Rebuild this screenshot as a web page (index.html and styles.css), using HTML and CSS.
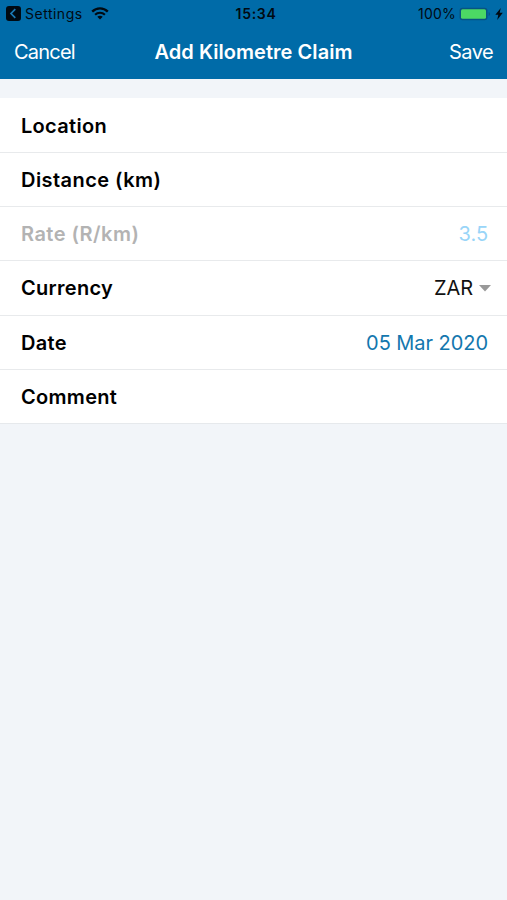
FILE: index.html
```html
<!DOCTYPE html>
<html lang="en">
<head>
  <meta charset="UTF-8">
  <meta name="viewport" content="width=device-width, initial-scale=1.0">
  <title>Add Kilometre Claim</title>
  <link rel="stylesheet" href="styles.css">
</head>
<body>
  <header class="header">
    <div class="status-bar">
      <div class="status-left">
        <svg class="back-icon" viewBox="0 0 15 15">
          <rect width="15" height="15" rx="3" fill="#000a12" />
          <path d="M9.3 3.2 L5 7.5 L9.3 11.8" fill="none" stroke="#1a7ab5" stroke-width="1.7" />
        </svg>
        <span class="status-app">Settings</span>
        <svg class="wifi-icon" viewBox="0 0 18 13">
          <path d="M1.2 4.6 C5.5 0.2 12.5 0.2 16.8 4.6" fill="none" stroke="#000a12" stroke-width="2.3" />
          <path d="M4.1 7.7 C6.8 5 11.2 5 13.9 7.7" fill="none" stroke="#000a12" stroke-width="2.1" />
          <path d="M6.3 9.8 C7.8 8.4 10.2 8.4 11.7 9.8 L9 12.5 Z" fill="#000a12" />
        </svg>
      </div>
      <span class="status-time">15:34</span>
      <div class="status-right">
        <span class="status-percent">100%</span>
        <svg class="battery-icon" viewBox="0 0 32 14">
          <rect x="0.5" y="0.7" width="28" height="12.6" rx="3" fill="#075482" />
          <rect x="2" y="2.2" width="25" height="9.6" rx="1.5" fill="#4cd964" />
          <path d="M29.7 5 C31.5 5.6 31.5 8.4 29.7 9 Z" fill="#075482" />
        </svg>
        <svg class="bolt-icon" viewBox="0 0 8 12">
          <path d="M5.8 0 L0.3 6.8 H3.3 L2.2 12 L7.8 4.8 H4.7 Z" fill="#000a12" />
        </svg>
      </div>
    </div>
    <nav class="nav-bar">
      <a class="nav-action nav-cancel">Cancel</a>
      <h1 class="nav-title">Add Kilometre Claim</h1>
      <a class="nav-action nav-save">Save</a>
    </nav>
  </header>

  <main class="form">
    <div class="row">
      <span class="label">Location</span>
    </div>
    <div class="row">
      <span class="label label-unit">Distance (km)</span>
    </div>
    <div class="row disabled">
      <span class="label label-unit">Rate (R/km)</span>
      <span class="value">3.5</span>
    </div>
    <div class="row select">
      <span class="label">Currency</span>
      <span class="value">ZAR</span>
      <svg class="caret" viewBox="0 0 12 7">
        <path d="M0 0 H12 L6 6.6 Z" fill="#999" />
      </svg>
    </div>
    <div class="row">
      <span class="label">Date</span>
      <span class="value">05 Mar 2020</span>
    </div>
    <div class="row">
      <span class="label">Comment</span>
    </div>
  </main>
</body>
</html>
```

FILE: styles.css
```css
body {
  margin: 0;
  min-height: 100vh;
  background-color: #f2f5f9;
  color: #000;
  font-family: Inter, 'Liberation Sans', sans-serif;
}
.header {
  height: 79px;
  background-color: #006ba8;
}
.status-bar {
  display: grid;
  grid-template-columns: 1fr auto 1fr;
  align-items: center;
  height: 27px;
  padding: 0 5px 0 6px;
  color: #000a12;
  font-size: 14px;
}
.status-left,
.status-right {
  display: flex;
  align-items: center;
}
.status-right {
  justify-content: flex-end;
}
.back-icon {
  width: 15px;
  height: 15px;
  margin-right: 4px;
}
.status-app {
  letter-spacing: 0.5px;
}
.wifi-icon {
  width: 18px;
  height: 13px;
  margin-left: 8px;
}
.status-time {
  padding-left: 4px;
  font-weight: 600;
  letter-spacing: 0.7px;
}
.status-percent {
  letter-spacing: 0.2px;
}
.battery-icon {
  width: 32px;
  height: 14px;
  margin-left: 3px;
}
.bolt-icon {
  width: 8px;
  height: 12px;
  margin-left: 4px;
  margin-right: -1px;
}
.nav-bar {
  display: grid;
  grid-template-columns: 1fr auto 1fr;
  align-items: center;
  height: 50px;
  padding: 0 14px;
  color: #fff;
}
.nav-action {
  font-size: 20px;
  letter-spacing: -0.6px;
}
.nav-cancel {
  letter-spacing: -0.8px;
}
.nav-save {
  text-align: right;
}
.nav-title {
  margin: 0;
  font-size: 20px;
  font-weight: 600;
  letter-spacing: 0.05px;
}
.form {
  margin-top: 19px;
  background-color: #fff;
  border-bottom: 1px solid #e6e9ec;
}
.row {
  display: flex;
  align-items: center;
  box-sizing: border-box;
  height: 54.2px;
  padding: 1px 19px 0 21px;
  border-bottom: 1px solid #e8eaec;
  font-size: 20px;
}
.row:first-child {
  height: 55px;
}
.row:last-child {
  height: 53.2px;
  border-bottom: none;
}
.label {
  font-weight: 600;
  letter-spacing: 0.3px;
}
.label-unit {
  letter-spacing: 0.45px;
}
.value {
  margin-left: auto;
  color: #1377ae;
  letter-spacing: -0.05px;
}
.disabled .label {
  color: #b3b3b3;
}
.disabled .value {
  color: #99d5f8;
}
.select {
  padding-right: 16px;
}
.select .value {
  color: #111;
}
.caret {
  width: 12px;
  height: 7px;
  margin-left: 6px;
}
```
